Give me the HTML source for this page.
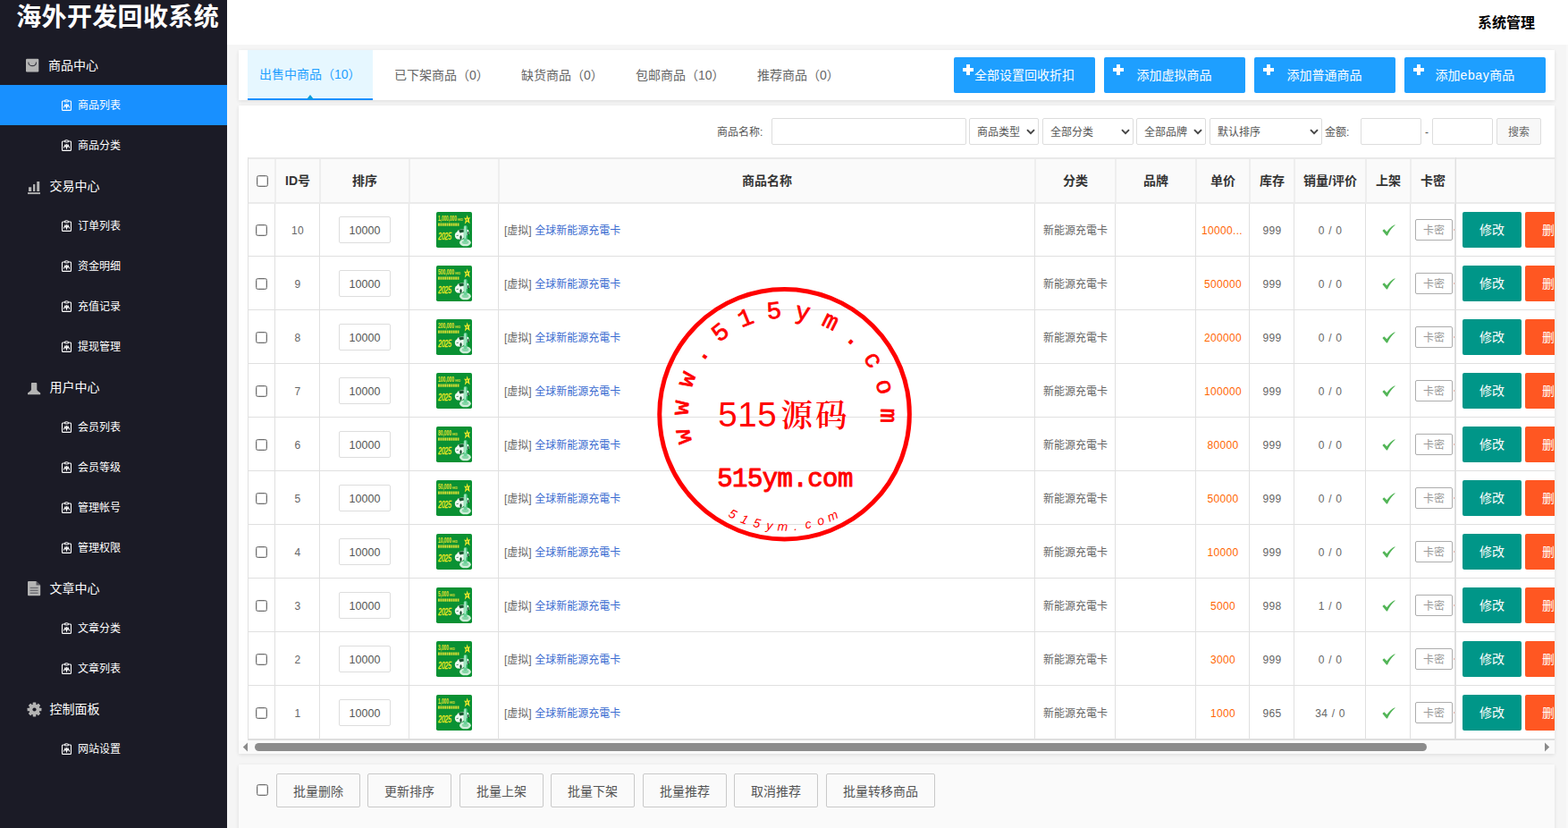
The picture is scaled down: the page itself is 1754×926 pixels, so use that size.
<!DOCTYPE html>
<html lang="zh-CN">
<head>
<meta charset="utf-8">
<title>海外开发回收系统</title>
<style>
*{box-sizing:border-box;margin:0;padding:0}
html,body{width:1754px;height:926px;overflow:hidden;background:#fff}
body{position:relative;font-family:"Liberation Sans","Noto Sans CJK SC",sans-serif;font-size:12px;color:#666;-webkit-font-smoothing:antialiased}
.a{position:absolute;white-space:nowrap}
.side{left:0;top:0;width:254px;height:926px;background:#1b1b26;color:#fff}
.logo{left:0;top:1px;width:254px;height:38px;line-height:38px;font-size:28px;font-weight:700;color:#fff;padding-left:18.2px;letter-spacing:.35px}
.grp{height:45px;line-height:47px;font-size:14px;color:#fff}
.itm{left:0;width:254px;height:45px;line-height:47px;font-size:12px;color:#fff;padding-left:87px}
.itm.on{background:#1890ff}
.itm svg{position:absolute;left:68px;top:16px}
.top{left:254px;top:0;width:1500px;height:50px;background:#fff}
.main{left:254px;top:50px;width:1500px;height:876px;background:#f5f5f5}
.card{background:#fff;box-shadow:0 1px 4px rgba(0,0,0,.07),0 2px 6px rgba(0,0,0,.03)}
.tab{top:56px;height:56px;line-height:56px;font-size:14px;color:#666}
.tab.on{background:#e6f7ff;color:#1e9fff;border-bottom:2px solid #1890ff;line-height:55px}
.btn{top:64px;width:158px;height:40px;background:#1e9fff;border-radius:2px;color:#fff;font-size:14px;line-height:40px}
.btn i{position:absolute;left:10px;top:8px;width:12px;height:12px}
.btn i:before,.btn i:after{content:"";position:absolute;background:#fff}
.btn i:before{left:4px;top:0;width:4px;height:12px}
.btn i:after{left:0;top:4px;width:12px;height:4px}
.btn span{position:absolute;top:0}
.inp{top:132px;height:30px;border:1px solid #ddd;border-radius:2px;background:#fff;line-height:30px;font-size:12px;color:#555}
.sel span{position:absolute;left:8px;top:0}
.sel svg{position:absolute;right:3px;top:11px}
.lbl{top:132px;height:30px;line-height:32px;font-size:12px;color:#555}
.th{top:177px;height:49px;line-height:51px;font-size:14px;font-weight:700;color:#333;text-align:center}
.vl{width:1px;background:#e0e0e0}
.hl{height:1px;background:#e0e0e0}
.td{height:59px;line-height:63px;font-size:12px;color:#666;text-align:center;letter-spacing:.33px;word-spacing:.8px}
.cb{width:13px;height:13px;border:1px solid #707070;border-radius:2.5px;background:#fff;box-shadow:inset 0 0 0 1px rgba(118,118,118,.3)}
.sort{left:379px;width:58px;height:30px;border:1px solid #ddd;border-radius:2px;background:#fff;line-height:30px;font-size:12.5px;color:#555;text-align:center}
.nm{left:564px;height:59px;line-height:63px;word-spacing:.2px;font-size:12px;color:#666}
.nm b{font-weight:400;color:#3a6bd0}
.pr{color:#ff6600}
.km{left:1583px;width:42px;height:24px;border:1px solid #adadad;border-radius:2px;background:#fff;line-height:24px;font-size:12px;color:#999;text-align:center}
.ed{left:1636px;width:66px;height:40px;border-radius:2px;background:#009688;color:#fff;font-size:14px;line-height:40px;text-align:center}
.de{left:1706px;width:66px;height:40px;border-radius:2px;background:#ff5722;color:#fff;font-size:14px;line-height:40px;text-align:center}
.th2{left:0;top:0}
.bb{top:865px;height:38px;border:1px solid #c9c9c9;border-radius:2px;line-height:38px;font-size:14px;color:#555;text-align:center;background:#fafafa}
</style>
</head>
<body>
<div class="a side">
<div class="a logo">海外开发回收系统</div>
<svg class="a" style="left:29px;top:65px" width="15" height="16" viewBox="0 0 15 16"><rect x="0" y="0.7" width="14.3" height="14.7" rx="1.2" fill="#b4b4b4"/><path d="M2.8 4.4 C2.8 10 11.5 10 11.5 4.4" fill="none" stroke="#3a3a42" stroke-width="1.1"/></svg>
<div class="a grp" style="left:54px;top:50px">商品中心</div>
<div class="a itm on" style="top:95px"><svg width="12" height="13" viewBox="0 0 12 13"><rect x="1.5" y="2" width="10" height="10.4" rx="1" fill="none" stroke="#fff" stroke-width="1.1"/><ellipse cx="6.5" cy="1.9" rx="2" ry="1.15" fill="#1890ff" stroke="#fff" stroke-width="1.1"/><path d="M3.2 9.6 L5 6 L6.5 9.8 L8 6 L9.8 9.6" fill="none" stroke="#fff" stroke-width="1.1"/><path d="M6.5 5 V9" stroke="#fff" stroke-width="0.9"/></svg>商品列表</div>
<div class="a itm" style="top:140px"><svg width="12" height="13" viewBox="0 0 12 13"><rect x="1.5" y="2" width="10" height="10.4" rx="1" fill="none" stroke="#fff" stroke-width="1.1"/><ellipse cx="6.5" cy="1.9" rx="2" ry="1.15" fill="#1b1b26" stroke="#fff" stroke-width="1.1"/><path d="M3.2 9.6 L5 6 L6.5 9.8 L8 6 L9.8 9.6" fill="none" stroke="#fff" stroke-width="1.1"/><path d="M6.5 5 V9" stroke="#fff" stroke-width="0.9"/></svg>商品分类</div>
<svg class="a" style="left:31px;top:203px" width="14" height="15" viewBox="0 0 14 15"><g fill="#b4b4b4"><rect x="1" y="6.3" width="3.2" height="4.7"/><rect x="6" y="3.1" width="2.3" height="7.9"/><rect x="10.2" y="0" width="3" height="11"/><rect x="0" y="12.2" width="14" height="1.9"/></g></svg>
<div class="a grp" style="left:55.5px;top:185px">交易中心</div>
<div class="a itm" style="top:230px"><svg width="12" height="13" viewBox="0 0 12 13"><rect x="1.5" y="2" width="10" height="10.4" rx="1" fill="none" stroke="#fff" stroke-width="1.1"/><ellipse cx="6.5" cy="1.9" rx="2" ry="1.15" fill="#1b1b26" stroke="#fff" stroke-width="1.1"/><path d="M3.2 9.6 L5 6 L6.5 9.8 L8 6 L9.8 9.6" fill="none" stroke="#fff" stroke-width="1.1"/><path d="M6.5 5 V9" stroke="#fff" stroke-width="0.9"/></svg>订单列表</div>
<div class="a itm" style="top:275px"><svg width="12" height="13" viewBox="0 0 12 13"><rect x="1.5" y="2" width="10" height="10.4" rx="1" fill="none" stroke="#fff" stroke-width="1.1"/><ellipse cx="6.5" cy="1.9" rx="2" ry="1.15" fill="#1b1b26" stroke="#fff" stroke-width="1.1"/><path d="M3.2 9.6 L5 6 L6.5 9.8 L8 6 L9.8 9.6" fill="none" stroke="#fff" stroke-width="1.1"/><path d="M6.5 5 V9" stroke="#fff" stroke-width="0.9"/></svg>资金明细</div>
<div class="a itm" style="top:320px"><svg width="12" height="13" viewBox="0 0 12 13"><rect x="1.5" y="2" width="10" height="10.4" rx="1" fill="none" stroke="#fff" stroke-width="1.1"/><ellipse cx="6.5" cy="1.9" rx="2" ry="1.15" fill="#1b1b26" stroke="#fff" stroke-width="1.1"/><path d="M3.2 9.6 L5 6 L6.5 9.8 L8 6 L9.8 9.6" fill="none" stroke="#fff" stroke-width="1.1"/><path d="M6.5 5 V9" stroke="#fff" stroke-width="0.9"/></svg>充值记录</div>
<div class="a itm" style="top:365px"><svg width="12" height="13" viewBox="0 0 12 13"><rect x="1.5" y="2" width="10" height="10.4" rx="1" fill="none" stroke="#fff" stroke-width="1.1"/><ellipse cx="6.5" cy="1.9" rx="2" ry="1.15" fill="#1b1b26" stroke="#fff" stroke-width="1.1"/><path d="M3.2 9.6 L5 6 L6.5 9.8 L8 6 L9.8 9.6" fill="none" stroke="#fff" stroke-width="1.1"/><path d="M6.5 5 V9" stroke="#fff" stroke-width="0.9"/></svg>提现管理</div>
<svg class="a" style="left:31px;top:428px" width="15" height="14" viewBox="0 0 15 14"><g fill="#b4b4b4"><rect x="3.9" y="0" width="6.4" height="9" rx="1"/><path d="M0 13.2 L0 11.6 L3 9.2 L3.9 8 L10.3 8 L11.2 9.2 L14.2 11.6 L14.2 13.2 Z"/></g></svg>
<div class="a grp" style="left:55.5px;top:410px">用户中心</div>
<div class="a itm" style="top:455px"><svg width="12" height="13" viewBox="0 0 12 13"><rect x="1.5" y="2" width="10" height="10.4" rx="1" fill="none" stroke="#fff" stroke-width="1.1"/><ellipse cx="6.5" cy="1.9" rx="2" ry="1.15" fill="#1b1b26" stroke="#fff" stroke-width="1.1"/><path d="M3.2 9.6 L5 6 L6.5 9.8 L8 6 L9.8 9.6" fill="none" stroke="#fff" stroke-width="1.1"/><path d="M6.5 5 V9" stroke="#fff" stroke-width="0.9"/></svg>会员列表</div>
<div class="a itm" style="top:500px"><svg width="12" height="13" viewBox="0 0 12 13"><rect x="1.5" y="2" width="10" height="10.4" rx="1" fill="none" stroke="#fff" stroke-width="1.1"/><ellipse cx="6.5" cy="1.9" rx="2" ry="1.15" fill="#1b1b26" stroke="#fff" stroke-width="1.1"/><path d="M3.2 9.6 L5 6 L6.5 9.8 L8 6 L9.8 9.6" fill="none" stroke="#fff" stroke-width="1.1"/><path d="M6.5 5 V9" stroke="#fff" stroke-width="0.9"/></svg>会员等级</div>
<div class="a itm" style="top:545px"><svg width="12" height="13" viewBox="0 0 12 13"><rect x="1.5" y="2" width="10" height="10.4" rx="1" fill="none" stroke="#fff" stroke-width="1.1"/><ellipse cx="6.5" cy="1.9" rx="2" ry="1.15" fill="#1b1b26" stroke="#fff" stroke-width="1.1"/><path d="M3.2 9.6 L5 6 L6.5 9.8 L8 6 L9.8 9.6" fill="none" stroke="#fff" stroke-width="1.1"/><path d="M6.5 5 V9" stroke="#fff" stroke-width="0.9"/></svg>管理帐号</div>
<div class="a itm" style="top:590px"><svg width="12" height="13" viewBox="0 0 12 13"><rect x="1.5" y="2" width="10" height="10.4" rx="1" fill="none" stroke="#fff" stroke-width="1.1"/><ellipse cx="6.5" cy="1.9" rx="2" ry="1.15" fill="#1b1b26" stroke="#fff" stroke-width="1.1"/><path d="M3.2 9.6 L5 6 L6.5 9.8 L8 6 L9.8 9.6" fill="none" stroke="#fff" stroke-width="1.1"/><path d="M6.5 5 V9" stroke="#fff" stroke-width="0.9"/></svg>管理权限</div>
<svg class="a" style="left:31px;top:650px" width="15" height="17" viewBox="0 0 15 17"><path d="M1 0 L9.5 0 L14.2 4.6 L14.2 15.2 Q14.2 16.2 13.2 16.2 L1 16.2 Q0 16.2 0 15.2 L0 1 Q0 0 1 0 Z" fill="#b4b4b4"/><path d="M9.5 0 L9.5 4.6 L14.2 4.6 Z" fill="#55555c"/><g fill="#6a6a70"><rect x="2.6" y="6.8" width="9" height="1.3"/><rect x="2.6" y="9.7" width="9" height="1.3"/><rect x="2.6" y="12.6" width="9" height="1.3"/></g></svg>
<div class="a grp" style="left:55.5px;top:635px">文章中心</div>
<div class="a itm" style="top:680px"><svg width="12" height="13" viewBox="0 0 12 13"><rect x="1.5" y="2" width="10" height="10.4" rx="1" fill="none" stroke="#fff" stroke-width="1.1"/><ellipse cx="6.5" cy="1.9" rx="2" ry="1.15" fill="#1b1b26" stroke="#fff" stroke-width="1.1"/><path d="M3.2 9.6 L5 6 L6.5 9.8 L8 6 L9.8 9.6" fill="none" stroke="#fff" stroke-width="1.1"/><path d="M6.5 5 V9" stroke="#fff" stroke-width="0.9"/></svg>文章分类</div>
<div class="a itm" style="top:725px"><svg width="12" height="13" viewBox="0 0 12 13"><rect x="1.5" y="2" width="10" height="10.4" rx="1" fill="none" stroke="#fff" stroke-width="1.1"/><ellipse cx="6.5" cy="1.9" rx="2" ry="1.15" fill="#1b1b26" stroke="#fff" stroke-width="1.1"/><path d="M3.2 9.6 L5 6 L6.5 9.8 L8 6 L9.8 9.6" fill="none" stroke="#fff" stroke-width="1.1"/><path d="M6.5 5 V9" stroke="#fff" stroke-width="0.9"/></svg>文章列表</div>
<svg class="a" style="left:29.5px;top:784.5px" width="17" height="17" viewBox="-8.5 -8.5 17 17"><g fill="#b4b4b4"><rect x="-1.8" y="-7.9" width="3.6" height="4" rx="0.6" transform="rotate(0)"/><rect x="-1.8" y="-7.9" width="3.6" height="4" rx="0.6" transform="rotate(45)"/><rect x="-1.8" y="-7.9" width="3.6" height="4" rx="0.6" transform="rotate(90)"/><rect x="-1.8" y="-7.9" width="3.6" height="4" rx="0.6" transform="rotate(135)"/><rect x="-1.8" y="-7.9" width="3.6" height="4" rx="0.6" transform="rotate(180)"/><rect x="-1.8" y="-7.9" width="3.6" height="4" rx="0.6" transform="rotate(225)"/><rect x="-1.8" y="-7.9" width="3.6" height="4" rx="0.6" transform="rotate(270)"/><rect x="-1.8" y="-7.9" width="3.6" height="4" rx="0.6" transform="rotate(315)"/><circle r="5.9"/></g><circle r="2.1" fill="#1b1b26"/></svg>
<div class="a grp" style="left:55.5px;top:770px">控制面板</div>
<div class="a itm" style="top:815px"><svg width="12" height="13" viewBox="0 0 12 13"><rect x="1.5" y="2" width="10" height="10.4" rx="1" fill="none" stroke="#fff" stroke-width="1.1"/><ellipse cx="6.5" cy="1.9" rx="2" ry="1.15" fill="#1b1b26" stroke="#fff" stroke-width="1.1"/><path d="M3.2 9.6 L5 6 L6.5 9.8 L8 6 L9.8 9.6" fill="none" stroke="#fff" stroke-width="1.1"/><path d="M6.5 5 V9" stroke="#fff" stroke-width="0.9"/></svg>网站设置</div>
</div>
<div class="a top"><div class="a" style="left:1399px;top:0;height:50px;line-height:52px;font-size:16px;font-weight:700;color:#000">系统管理</div></div>
<div class="a main"></div>
<div class="a" style="left:1752px;top:50px;width:2px;height:876px;background:#f9f9f9"></div>
<div class="a card" style="left:267px;top:56px;width:1472px;height:56px"></div>
<div class="a tab on" style="left:277px;width:140px;padding-left:13px">出售中商品（10）</div>
<div class="a" style="left:343px;top:105.5px;width:0;height:0;border-left:4.5px solid transparent;border-right:4.5px solid transparent;border-bottom:5px solid #0b9ddb"></div>
<div class="a tab" style="left:441px">已下架商品（0）</div>
<div class="a tab" style="left:583px">缺货商品（0）</div>
<div class="a tab" style="left:711px">包邮商品（10）</div>
<div class="a tab" style="left:847px">推荐商品（0）</div>
<div class="a btn" style="left:1067px"><i></i><span style="left:23px">全部设置回收折扣</span></div>
<div class="a btn" style="left:1235px"><i></i><span style="left:36.5px">添加虚拟商品</span></div>
<div class="a btn" style="left:1403px"><i></i><span style="left:36.5px">添加普通商品</span></div>
<div class="a btn" style="left:1571px"><i></i><span style="left:34.5px">添加<span style="position:static;letter-spacing:.6px">ebay</span>商品</span></div>
<div class="a card" style="left:267px;top:118px;width:1472px;height:725px;overflow:hidden">
</div>
<div class="a lbl" style="left:802px">商品名称:</div>
<div class="a inp" style="left:863px;width:218px"></div>
<div class="a inp sel" style="left:1084px;width:78px"><span>商品类型</span><svg width="10" height="7" viewBox="0 0 10 7"><path d="M1 1.2 L5 5.2 L9 1.2" fill="none" stroke="#444" stroke-width="1.9"/></svg></div>
<div class="a inp sel" style="left:1166px;width:102px"><span>全部分类</span><svg width="10" height="7" viewBox="0 0 10 7"><path d="M1 1.2 L5 5.2 L9 1.2" fill="none" stroke="#444" stroke-width="1.9"/></svg></div>
<div class="a inp sel" style="left:1271px;width:78px"><span>全部品牌</span><svg width="10" height="7" viewBox="0 0 10 7"><path d="M1 1.2 L5 5.2 L9 1.2" fill="none" stroke="#444" stroke-width="1.9"/></svg></div>
<div class="a inp sel" style="left:1353px;width:126px"><span>默认排序</span><svg width="10" height="7" viewBox="0 0 10 7"><path d="M1 1.2 L5 5.2 L9 1.2" fill="none" stroke="#444" stroke-width="1.9"/></svg></div>
<div class="a lbl" style="left:1482px">金额:</div>
<div class="a inp" style="left:1522px;width:68px"></div>
<div class="a lbl" style="left:1594px">-</div>
<div class="a inp" style="left:1602px;width:68px"></div>
<div class="a inp" style="left:1674px;width:50px;background:#f8f8f8;text-align:center;color:#666">搜索</div>
<div class="a" style="left:277px;top:176px;width:1462px;height:652px;overflow:hidden;background:#fff">
<div class="a" style="left:0;top:0;width:1462px;height:51px;background:#fafafa"></div>
<div class="a" style="left:0;top:0;width:1462px;height:2px;background:#e9e9e9"></div>
<div class="a" style="left:0;top:50px;width:1462px;height:2px;background:#ebebeb"></div>
<div class="a hl" style="left:0;top:110px;width:1462px"></div>
<div class="a hl" style="left:0;top:170px;width:1462px"></div>
<div class="a hl" style="left:0;top:230px;width:1462px"></div>
<div class="a hl" style="left:0;top:290px;width:1462px"></div>
<div class="a hl" style="left:0;top:350px;width:1462px"></div>
<div class="a hl" style="left:0;top:410px;width:1462px"></div>
<div class="a hl" style="left:0;top:470px;width:1462px"></div>
<div class="a hl" style="left:0;top:530px;width:1462px"></div>
<div class="a hl" style="left:0;top:590px;width:1462px"></div>
<div class="a hl" style="left:0;top:650px;width:1462px"></div>
<div class="a" style="left:0;top:650px;width:1462px;height:2px;background:#dedede"></div>
<div class="a vl" style="left:0;top:0;height:651px"></div>
<div class="a vl" style="left:30px;top:52px;height:599px"></div>
<div class="a" style="left:30px;top:2px;width:2px;height:48px;background:#eeeeee"></div>
<div class="a vl" style="left:80px;top:52px;height:599px"></div>
<div class="a" style="left:80px;top:2px;width:2px;height:48px;background:#eeeeee"></div>
<div class="a vl" style="left:180px;top:52px;height:599px"></div>
<div class="a" style="left:180px;top:2px;width:2px;height:48px;background:#eeeeee"></div>
<div class="a vl" style="left:280px;top:52px;height:599px"></div>
<div class="a" style="left:280px;top:2px;width:2px;height:48px;background:#eeeeee"></div>
<div class="a vl" style="left:880px;top:52px;height:599px"></div>
<div class="a" style="left:880px;top:2px;width:2px;height:48px;background:#eeeeee"></div>
<div class="a vl" style="left:970px;top:52px;height:599px"></div>
<div class="a" style="left:970px;top:2px;width:2px;height:48px;background:#eeeeee"></div>
<div class="a vl" style="left:1060px;top:52px;height:599px"></div>
<div class="a" style="left:1060px;top:2px;width:2px;height:48px;background:#eeeeee"></div>
<div class="a vl" style="left:1120px;top:52px;height:599px"></div>
<div class="a" style="left:1120px;top:2px;width:2px;height:48px;background:#eeeeee"></div>
<div class="a vl" style="left:1170px;top:52px;height:599px"></div>
<div class="a" style="left:1170px;top:2px;width:2px;height:48px;background:#eeeeee"></div>
<div class="a vl" style="left:1250px;top:52px;height:599px"></div>
<div class="a" style="left:1250px;top:2px;width:2px;height:48px;background:#eeeeee"></div>
<div class="a vl" style="left:1300px;top:52px;height:599px"></div>
<div class="a" style="left:1300px;top:2px;width:2px;height:48px;background:#eeeeee"></div>
<div class="a vl" style="left:1350px;top:52px;height:599px"></div>
<div class="a" style="left:1350px;top:2px;width:2px;height:48px;background:#eeeeee"></div>
<div class="a vl" style="left:1351px;top:0;height:651px"></div>
<div class="a cb" style="left:10px;top:20px"></div>
<div class="a th" style="left:31px;top:1px;width:50px">ID号</div>
<div class="a th" style="left:81px;top:1px;width:100px">排序</div>
<div class="a th" style="left:281px;top:1px;width:600px">商品名称</div>
<div class="a th" style="left:881px;top:1px;width:90px">分类</div>
<div class="a th" style="left:971px;top:1px;width:90px">品牌</div>
<div class="a th" style="left:1061px;top:1px;width:60px">单价</div>
<div class="a th" style="left:1121px;top:1px;width:50px">库存</div>
<div class="a th" style="left:1171px;top:1px;width:80px">销量/评价</div>
<div class="a th" style="left:1251px;top:1px;width:50px">上架</div>
<div class="a th" style="left:1301px;top:1px;width:50px">卡密</div>
<div class="a cb" style="left:9px;top:75px"></div>
<div class="a td" style="left:31px;top:51px;width:50px">10</div>
<div class="a sort" style="top:66px;left:102px">10000</div>
<svg class="a" style="left:211px;top:61px" width="40" height="40" viewBox="0 0 40 40"><rect width="40" height="40" rx="1.8" fill="#0a9133"/><text x="2" y="10.1" font-family="Liberation Sans,sans-serif" font-size="8.6" font-weight="700" fill="#e3e230" textLength="20.8" lengthAdjust="spacingAndGlyphs">1,000,000</text><text x="23.7" y="9.9" font-family="Liberation Sans,sans-serif" font-size="4.2" font-weight="700" fill="#dfe033" textLength="6" lengthAdjust="spacingAndGlyphs">HKD</text><path d="M2 14.15 H26" stroke="#dde034" stroke-width="3.2" stroke-dasharray="1.9 0.5" opacity=".92"/><text x="2.2" y="31" font-family="Liberation Sans,sans-serif" font-size="10.4" font-style="italic" fill="#f4ec22" stroke="#f4ec22" stroke-width="0.35" textLength="14.8" lengthAdjust="spacingAndGlyphs">2025</text><path d="M34.7 3.2 L35.6 6.7 L38.1 6 L36.6 8.8 L37.7 13.2 L34.6 10.8 L31.8 13.7 L32.8 9.2 L31 6.6 L33.6 6.9 Z" fill="#f1e82c"/><path d="M34.4 7.2 L35.1 8.7 L34.4 10.2 L33.7 8.7 Z" fill="#0a9133"/><ellipse cx="32.4" cy="34.3" rx="6.4" ry="4" fill="#cfeeda"/><ellipse cx="32.6" cy="34" rx="3.8" ry="2.1" fill="#86d6a6"/><path d="M20.8 26 Q20.8 23 23 22.4 L24.6 20.3 L30.8 18.9 L36 20 L37 24.6 L34.5 26 L28.4 30.8 L23.5 30.4 Q20.8 29.5 20.8 26 Z" fill="#eef9f1"/><path d="M24.9 20.6 L30.6 19.3 L31 22.6 L26.6 23.6 Z" fill="#1c5632"/><ellipse cx="27.5" cy="28.6" rx="1.1" ry="2.3" fill="#123f25"/><ellipse cx="35.6" cy="24" rx="0.8" ry="2" fill="#123f25"/><path d="M22.6 26.6 L24.8 26.2" stroke="#2c6a45" stroke-width="0.8"/><rect x="30.7" y="14.9" width="3.9" height="18.4" rx="1.8" fill="#63cf95" opacity=".92"/><rect x="31.5" y="16" width="1.4" height="14" rx="0.7" fill="#baf0d2"/></svg>
<div class="a nm" style="left:287px;top:51px">[虚拟] <b>全球新能源充電卡</b></div>
<div class="a td" style="left:881px;top:51px;width:90px;letter-spacing:0">新能源充電卡</div>
<div class="a td pr" style="left:1067px;top:51px;width:48px;text-align:left">10000...</div>
<div class="a td" style="left:1121px;top:51px;width:50px">999</div>
<div class="a td" style="left:1171px;top:51px;width:80px">0 / 0</div>
<svg class="a" style="left:1268.5px;top:74.6px" width="15" height="13" viewBox="0 0 15 13"><path d="M0.4 6.9 L2.3 5.2 L5.3 8.3 C7.5 5 10.5 2 14.3 0.2 L14.6 0.7 C11 3.6 8.3 7.6 6 12.4 L5 12.4 Z" fill="#52b557"/></svg>
<div class="a km" style="left:1306px;top:69px">卡密</div>
<div class="a" style="left:1349px;top:80px;width:1px;height:2px;background:#e3b0a6"></div>
<div class="a ed" style="left:1359px;top:61px">修改</div>
<div class="a de" style="left:1429px;top:61px">删除</div>
<div class="a cb" style="left:9px;top:135px"></div>
<div class="a td" style="left:31px;top:111px;width:50px">9</div>
<div class="a sort" style="top:126px;left:102px">10000</div>
<svg class="a" style="left:211px;top:121px" width="40" height="40" viewBox="0 0 40 40"><rect width="40" height="40" rx="1.8" fill="#0a9133"/><text x="2" y="10.1" font-family="Liberation Sans,sans-serif" font-size="8.6" font-weight="700" fill="#e3e230" textLength="18.1" lengthAdjust="spacingAndGlyphs">500,000</text><text x="21.0" y="9.9" font-family="Liberation Sans,sans-serif" font-size="4.2" font-weight="700" fill="#dfe033" textLength="6" lengthAdjust="spacingAndGlyphs">HKD</text><path d="M2 14.15 H26" stroke="#dde034" stroke-width="3.2" stroke-dasharray="1.9 0.5" opacity=".92"/><text x="2.2" y="31" font-family="Liberation Sans,sans-serif" font-size="10.4" font-style="italic" fill="#f4ec22" stroke="#f4ec22" stroke-width="0.35" textLength="14.8" lengthAdjust="spacingAndGlyphs">2025</text><path d="M34.7 3.2 L35.6 6.7 L38.1 6 L36.6 8.8 L37.7 13.2 L34.6 10.8 L31.8 13.7 L32.8 9.2 L31 6.6 L33.6 6.9 Z" fill="#f1e82c"/><path d="M34.4 7.2 L35.1 8.7 L34.4 10.2 L33.7 8.7 Z" fill="#0a9133"/><ellipse cx="32.4" cy="34.3" rx="6.4" ry="4" fill="#cfeeda"/><ellipse cx="32.6" cy="34" rx="3.8" ry="2.1" fill="#86d6a6"/><path d="M20.8 26 Q20.8 23 23 22.4 L24.6 20.3 L30.8 18.9 L36 20 L37 24.6 L34.5 26 L28.4 30.8 L23.5 30.4 Q20.8 29.5 20.8 26 Z" fill="#eef9f1"/><path d="M24.9 20.6 L30.6 19.3 L31 22.6 L26.6 23.6 Z" fill="#1c5632"/><ellipse cx="27.5" cy="28.6" rx="1.1" ry="2.3" fill="#123f25"/><ellipse cx="35.6" cy="24" rx="0.8" ry="2" fill="#123f25"/><path d="M22.6 26.6 L24.8 26.2" stroke="#2c6a45" stroke-width="0.8"/><rect x="30.7" y="14.9" width="3.9" height="18.4" rx="1.8" fill="#63cf95" opacity=".92"/><rect x="31.5" y="16" width="1.4" height="14" rx="0.7" fill="#baf0d2"/></svg>
<div class="a nm" style="left:287px;top:111px">[虚拟] <b>全球新能源充電卡</b></div>
<div class="a td" style="left:881px;top:111px;width:90px;letter-spacing:0">新能源充電卡</div>
<div class="a td pr" style="left:1061px;top:111px;width:60px">500000</div>
<div class="a td" style="left:1121px;top:111px;width:50px">999</div>
<div class="a td" style="left:1171px;top:111px;width:80px">0 / 0</div>
<svg class="a" style="left:1268.5px;top:134.6px" width="15" height="13" viewBox="0 0 15 13"><path d="M0.4 6.9 L2.3 5.2 L5.3 8.3 C7.5 5 10.5 2 14.3 0.2 L14.6 0.7 C11 3.6 8.3 7.6 6 12.4 L5 12.4 Z" fill="#52b557"/></svg>
<div class="a km" style="left:1306px;top:129px">卡密</div>
<div class="a" style="left:1349px;top:140px;width:1px;height:2px;background:#e3b0a6"></div>
<div class="a ed" style="left:1359px;top:121px">修改</div>
<div class="a de" style="left:1429px;top:121px">删除</div>
<div class="a cb" style="left:9px;top:195px"></div>
<div class="a td" style="left:31px;top:171px;width:50px">8</div>
<div class="a sort" style="top:186px;left:102px">10000</div>
<svg class="a" style="left:211px;top:181px" width="40" height="40" viewBox="0 0 40 40"><rect width="40" height="40" rx="1.8" fill="#0a9133"/><text x="2" y="10.1" font-family="Liberation Sans,sans-serif" font-size="8.6" font-weight="700" fill="#e3e230" textLength="18.1" lengthAdjust="spacingAndGlyphs">200,000</text><text x="21.0" y="9.9" font-family="Liberation Sans,sans-serif" font-size="4.2" font-weight="700" fill="#dfe033" textLength="6" lengthAdjust="spacingAndGlyphs">HKD</text><path d="M2 14.15 H26" stroke="#dde034" stroke-width="3.2" stroke-dasharray="1.9 0.5" opacity=".92"/><text x="2.2" y="31" font-family="Liberation Sans,sans-serif" font-size="10.4" font-style="italic" fill="#f4ec22" stroke="#f4ec22" stroke-width="0.35" textLength="14.8" lengthAdjust="spacingAndGlyphs">2025</text><path d="M34.7 3.2 L35.6 6.7 L38.1 6 L36.6 8.8 L37.7 13.2 L34.6 10.8 L31.8 13.7 L32.8 9.2 L31 6.6 L33.6 6.9 Z" fill="#f1e82c"/><path d="M34.4 7.2 L35.1 8.7 L34.4 10.2 L33.7 8.7 Z" fill="#0a9133"/><ellipse cx="32.4" cy="34.3" rx="6.4" ry="4" fill="#cfeeda"/><ellipse cx="32.6" cy="34" rx="3.8" ry="2.1" fill="#86d6a6"/><path d="M20.8 26 Q20.8 23 23 22.4 L24.6 20.3 L30.8 18.9 L36 20 L37 24.6 L34.5 26 L28.4 30.8 L23.5 30.4 Q20.8 29.5 20.8 26 Z" fill="#eef9f1"/><path d="M24.9 20.6 L30.6 19.3 L31 22.6 L26.6 23.6 Z" fill="#1c5632"/><ellipse cx="27.5" cy="28.6" rx="1.1" ry="2.3" fill="#123f25"/><ellipse cx="35.6" cy="24" rx="0.8" ry="2" fill="#123f25"/><path d="M22.6 26.6 L24.8 26.2" stroke="#2c6a45" stroke-width="0.8"/><rect x="30.7" y="14.9" width="3.9" height="18.4" rx="1.8" fill="#63cf95" opacity=".92"/><rect x="31.5" y="16" width="1.4" height="14" rx="0.7" fill="#baf0d2"/></svg>
<div class="a nm" style="left:287px;top:171px">[虚拟] <b>全球新能源充電卡</b></div>
<div class="a td" style="left:881px;top:171px;width:90px;letter-spacing:0">新能源充電卡</div>
<div class="a td pr" style="left:1061px;top:171px;width:60px">200000</div>
<div class="a td" style="left:1121px;top:171px;width:50px">999</div>
<div class="a td" style="left:1171px;top:171px;width:80px">0 / 0</div>
<svg class="a" style="left:1268.5px;top:194.6px" width="15" height="13" viewBox="0 0 15 13"><path d="M0.4 6.9 L2.3 5.2 L5.3 8.3 C7.5 5 10.5 2 14.3 0.2 L14.6 0.7 C11 3.6 8.3 7.6 6 12.4 L5 12.4 Z" fill="#52b557"/></svg>
<div class="a km" style="left:1306px;top:189px">卡密</div>
<div class="a" style="left:1349px;top:200px;width:1px;height:2px;background:#e3b0a6"></div>
<div class="a ed" style="left:1359px;top:181px">修改</div>
<div class="a de" style="left:1429px;top:181px">删除</div>
<div class="a cb" style="left:9px;top:255px"></div>
<div class="a td" style="left:31px;top:231px;width:50px">7</div>
<div class="a sort" style="top:246px;left:102px">10000</div>
<svg class="a" style="left:211px;top:241px" width="40" height="40" viewBox="0 0 40 40"><rect width="40" height="40" rx="1.8" fill="#0a9133"/><text x="2" y="10.1" font-family="Liberation Sans,sans-serif" font-size="8.6" font-weight="700" fill="#e3e230" textLength="18.1" lengthAdjust="spacingAndGlyphs">100,000</text><text x="21.0" y="9.9" font-family="Liberation Sans,sans-serif" font-size="4.2" font-weight="700" fill="#dfe033" textLength="6" lengthAdjust="spacingAndGlyphs">HKD</text><path d="M2 14.15 H26" stroke="#dde034" stroke-width="3.2" stroke-dasharray="1.9 0.5" opacity=".92"/><text x="2.2" y="31" font-family="Liberation Sans,sans-serif" font-size="10.4" font-style="italic" fill="#f4ec22" stroke="#f4ec22" stroke-width="0.35" textLength="14.8" lengthAdjust="spacingAndGlyphs">2025</text><path d="M34.7 3.2 L35.6 6.7 L38.1 6 L36.6 8.8 L37.7 13.2 L34.6 10.8 L31.8 13.7 L32.8 9.2 L31 6.6 L33.6 6.9 Z" fill="#f1e82c"/><path d="M34.4 7.2 L35.1 8.7 L34.4 10.2 L33.7 8.7 Z" fill="#0a9133"/><ellipse cx="32.4" cy="34.3" rx="6.4" ry="4" fill="#cfeeda"/><ellipse cx="32.6" cy="34" rx="3.8" ry="2.1" fill="#86d6a6"/><path d="M20.8 26 Q20.8 23 23 22.4 L24.6 20.3 L30.8 18.9 L36 20 L37 24.6 L34.5 26 L28.4 30.8 L23.5 30.4 Q20.8 29.5 20.8 26 Z" fill="#eef9f1"/><path d="M24.9 20.6 L30.6 19.3 L31 22.6 L26.6 23.6 Z" fill="#1c5632"/><ellipse cx="27.5" cy="28.6" rx="1.1" ry="2.3" fill="#123f25"/><ellipse cx="35.6" cy="24" rx="0.8" ry="2" fill="#123f25"/><path d="M22.6 26.6 L24.8 26.2" stroke="#2c6a45" stroke-width="0.8"/><rect x="30.7" y="14.9" width="3.9" height="18.4" rx="1.8" fill="#63cf95" opacity=".92"/><rect x="31.5" y="16" width="1.4" height="14" rx="0.7" fill="#baf0d2"/></svg>
<div class="a nm" style="left:287px;top:231px">[虚拟] <b>全球新能源充電卡</b></div>
<div class="a td" style="left:881px;top:231px;width:90px;letter-spacing:0">新能源充電卡</div>
<div class="a td pr" style="left:1061px;top:231px;width:60px">100000</div>
<div class="a td" style="left:1121px;top:231px;width:50px">999</div>
<div class="a td" style="left:1171px;top:231px;width:80px">0 / 0</div>
<svg class="a" style="left:1268.5px;top:254.6px" width="15" height="13" viewBox="0 0 15 13"><path d="M0.4 6.9 L2.3 5.2 L5.3 8.3 C7.5 5 10.5 2 14.3 0.2 L14.6 0.7 C11 3.6 8.3 7.6 6 12.4 L5 12.4 Z" fill="#52b557"/></svg>
<div class="a km" style="left:1306px;top:249px">卡密</div>
<div class="a" style="left:1349px;top:260px;width:1px;height:2px;background:#e3b0a6"></div>
<div class="a ed" style="left:1359px;top:241px">修改</div>
<div class="a de" style="left:1429px;top:241px">删除</div>
<div class="a cb" style="left:9px;top:315px"></div>
<div class="a td" style="left:31px;top:291px;width:50px">6</div>
<div class="a sort" style="top:306px;left:102px">10000</div>
<svg class="a" style="left:211px;top:301px" width="40" height="40" viewBox="0 0 40 40"><rect width="40" height="40" rx="1.8" fill="#0a9133"/><text x="2" y="10.1" font-family="Liberation Sans,sans-serif" font-size="8.6" font-weight="700" fill="#e3e230" textLength="14.9" lengthAdjust="spacingAndGlyphs">80,000</text><text x="17.8" y="9.9" font-family="Liberation Sans,sans-serif" font-size="4.2" font-weight="700" fill="#dfe033" textLength="6" lengthAdjust="spacingAndGlyphs">HKD</text><path d="M2 14.15 H26" stroke="#dde034" stroke-width="3.2" stroke-dasharray="1.9 0.5" opacity=".92"/><text x="2.2" y="31" font-family="Liberation Sans,sans-serif" font-size="10.4" font-style="italic" fill="#f4ec22" stroke="#f4ec22" stroke-width="0.35" textLength="14.8" lengthAdjust="spacingAndGlyphs">2025</text><path d="M34.7 3.2 L35.6 6.7 L38.1 6 L36.6 8.8 L37.7 13.2 L34.6 10.8 L31.8 13.7 L32.8 9.2 L31 6.6 L33.6 6.9 Z" fill="#f1e82c"/><path d="M34.4 7.2 L35.1 8.7 L34.4 10.2 L33.7 8.7 Z" fill="#0a9133"/><ellipse cx="32.4" cy="34.3" rx="6.4" ry="4" fill="#cfeeda"/><ellipse cx="32.6" cy="34" rx="3.8" ry="2.1" fill="#86d6a6"/><path d="M20.8 26 Q20.8 23 23 22.4 L24.6 20.3 L30.8 18.9 L36 20 L37 24.6 L34.5 26 L28.4 30.8 L23.5 30.4 Q20.8 29.5 20.8 26 Z" fill="#eef9f1"/><path d="M24.9 20.6 L30.6 19.3 L31 22.6 L26.6 23.6 Z" fill="#1c5632"/><ellipse cx="27.5" cy="28.6" rx="1.1" ry="2.3" fill="#123f25"/><ellipse cx="35.6" cy="24" rx="0.8" ry="2" fill="#123f25"/><path d="M22.6 26.6 L24.8 26.2" stroke="#2c6a45" stroke-width="0.8"/><rect x="30.7" y="14.9" width="3.9" height="18.4" rx="1.8" fill="#63cf95" opacity=".92"/><rect x="31.5" y="16" width="1.4" height="14" rx="0.7" fill="#baf0d2"/></svg>
<div class="a nm" style="left:287px;top:291px">[虚拟] <b>全球新能源充電卡</b></div>
<div class="a td" style="left:881px;top:291px;width:90px;letter-spacing:0">新能源充電卡</div>
<div class="a td pr" style="left:1061px;top:291px;width:60px">80000</div>
<div class="a td" style="left:1121px;top:291px;width:50px">999</div>
<div class="a td" style="left:1171px;top:291px;width:80px">0 / 0</div>
<svg class="a" style="left:1268.5px;top:314.6px" width="15" height="13" viewBox="0 0 15 13"><path d="M0.4 6.9 L2.3 5.2 L5.3 8.3 C7.5 5 10.5 2 14.3 0.2 L14.6 0.7 C11 3.6 8.3 7.6 6 12.4 L5 12.4 Z" fill="#52b557"/></svg>
<div class="a km" style="left:1306px;top:309px">卡密</div>
<div class="a" style="left:1349px;top:320px;width:1px;height:2px;background:#e3b0a6"></div>
<div class="a ed" style="left:1359px;top:301px">修改</div>
<div class="a de" style="left:1429px;top:301px">删除</div>
<div class="a cb" style="left:9px;top:375px"></div>
<div class="a td" style="left:31px;top:351px;width:50px">5</div>
<div class="a sort" style="top:366px;left:102px">10000</div>
<svg class="a" style="left:211px;top:361px" width="40" height="40" viewBox="0 0 40 40"><rect width="40" height="40" rx="1.8" fill="#0a9133"/><text x="2" y="10.1" font-family="Liberation Sans,sans-serif" font-size="8.6" font-weight="700" fill="#e3e230" textLength="14.9" lengthAdjust="spacingAndGlyphs">50,000</text><text x="17.8" y="9.9" font-family="Liberation Sans,sans-serif" font-size="4.2" font-weight="700" fill="#dfe033" textLength="6" lengthAdjust="spacingAndGlyphs">HKD</text><path d="M2 14.15 H26" stroke="#dde034" stroke-width="3.2" stroke-dasharray="1.9 0.5" opacity=".92"/><text x="2.2" y="31" font-family="Liberation Sans,sans-serif" font-size="10.4" font-style="italic" fill="#f4ec22" stroke="#f4ec22" stroke-width="0.35" textLength="14.8" lengthAdjust="spacingAndGlyphs">2025</text><path d="M34.7 3.2 L35.6 6.7 L38.1 6 L36.6 8.8 L37.7 13.2 L34.6 10.8 L31.8 13.7 L32.8 9.2 L31 6.6 L33.6 6.9 Z" fill="#f1e82c"/><path d="M34.4 7.2 L35.1 8.7 L34.4 10.2 L33.7 8.7 Z" fill="#0a9133"/><ellipse cx="32.4" cy="34.3" rx="6.4" ry="4" fill="#cfeeda"/><ellipse cx="32.6" cy="34" rx="3.8" ry="2.1" fill="#86d6a6"/><path d="M20.8 26 Q20.8 23 23 22.4 L24.6 20.3 L30.8 18.9 L36 20 L37 24.6 L34.5 26 L28.4 30.8 L23.5 30.4 Q20.8 29.5 20.8 26 Z" fill="#eef9f1"/><path d="M24.9 20.6 L30.6 19.3 L31 22.6 L26.6 23.6 Z" fill="#1c5632"/><ellipse cx="27.5" cy="28.6" rx="1.1" ry="2.3" fill="#123f25"/><ellipse cx="35.6" cy="24" rx="0.8" ry="2" fill="#123f25"/><path d="M22.6 26.6 L24.8 26.2" stroke="#2c6a45" stroke-width="0.8"/><rect x="30.7" y="14.9" width="3.9" height="18.4" rx="1.8" fill="#63cf95" opacity=".92"/><rect x="31.5" y="16" width="1.4" height="14" rx="0.7" fill="#baf0d2"/></svg>
<div class="a nm" style="left:287px;top:351px">[虚拟] <b>全球新能源充電卡</b></div>
<div class="a td" style="left:881px;top:351px;width:90px;letter-spacing:0">新能源充電卡</div>
<div class="a td pr" style="left:1061px;top:351px;width:60px">50000</div>
<div class="a td" style="left:1121px;top:351px;width:50px">999</div>
<div class="a td" style="left:1171px;top:351px;width:80px">0 / 0</div>
<svg class="a" style="left:1268.5px;top:374.6px" width="15" height="13" viewBox="0 0 15 13"><path d="M0.4 6.9 L2.3 5.2 L5.3 8.3 C7.5 5 10.5 2 14.3 0.2 L14.6 0.7 C11 3.6 8.3 7.6 6 12.4 L5 12.4 Z" fill="#52b557"/></svg>
<div class="a km" style="left:1306px;top:369px">卡密</div>
<div class="a" style="left:1349px;top:380px;width:1px;height:2px;background:#e3b0a6"></div>
<div class="a ed" style="left:1359px;top:361px">修改</div>
<div class="a de" style="left:1429px;top:361px">删除</div>
<div class="a cb" style="left:9px;top:435px"></div>
<div class="a td" style="left:31px;top:411px;width:50px">4</div>
<div class="a sort" style="top:426px;left:102px">10000</div>
<svg class="a" style="left:211px;top:421px" width="40" height="40" viewBox="0 0 40 40"><rect width="40" height="40" rx="1.8" fill="#0a9133"/><text x="2" y="10.1" font-family="Liberation Sans,sans-serif" font-size="8.6" font-weight="700" fill="#e3e230" textLength="14.9" lengthAdjust="spacingAndGlyphs">10,000</text><text x="17.8" y="9.9" font-family="Liberation Sans,sans-serif" font-size="4.2" font-weight="700" fill="#dfe033" textLength="6" lengthAdjust="spacingAndGlyphs">HKD</text><path d="M2 14.15 H26" stroke="#dde034" stroke-width="3.2" stroke-dasharray="1.9 0.5" opacity=".92"/><text x="2.2" y="31" font-family="Liberation Sans,sans-serif" font-size="10.4" font-style="italic" fill="#f4ec22" stroke="#f4ec22" stroke-width="0.35" textLength="14.8" lengthAdjust="spacingAndGlyphs">2025</text><path d="M34.7 3.2 L35.6 6.7 L38.1 6 L36.6 8.8 L37.7 13.2 L34.6 10.8 L31.8 13.7 L32.8 9.2 L31 6.6 L33.6 6.9 Z" fill="#f1e82c"/><path d="M34.4 7.2 L35.1 8.7 L34.4 10.2 L33.7 8.7 Z" fill="#0a9133"/><ellipse cx="32.4" cy="34.3" rx="6.4" ry="4" fill="#cfeeda"/><ellipse cx="32.6" cy="34" rx="3.8" ry="2.1" fill="#86d6a6"/><path d="M20.8 26 Q20.8 23 23 22.4 L24.6 20.3 L30.8 18.9 L36 20 L37 24.6 L34.5 26 L28.4 30.8 L23.5 30.4 Q20.8 29.5 20.8 26 Z" fill="#eef9f1"/><path d="M24.9 20.6 L30.6 19.3 L31 22.6 L26.6 23.6 Z" fill="#1c5632"/><ellipse cx="27.5" cy="28.6" rx="1.1" ry="2.3" fill="#123f25"/><ellipse cx="35.6" cy="24" rx="0.8" ry="2" fill="#123f25"/><path d="M22.6 26.6 L24.8 26.2" stroke="#2c6a45" stroke-width="0.8"/><rect x="30.7" y="14.9" width="3.9" height="18.4" rx="1.8" fill="#63cf95" opacity=".92"/><rect x="31.5" y="16" width="1.4" height="14" rx="0.7" fill="#baf0d2"/></svg>
<div class="a nm" style="left:287px;top:411px">[虚拟] <b>全球新能源充電卡</b></div>
<div class="a td" style="left:881px;top:411px;width:90px;letter-spacing:0">新能源充電卡</div>
<div class="a td pr" style="left:1061px;top:411px;width:60px">10000</div>
<div class="a td" style="left:1121px;top:411px;width:50px">999</div>
<div class="a td" style="left:1171px;top:411px;width:80px">0 / 0</div>
<svg class="a" style="left:1268.5px;top:434.6px" width="15" height="13" viewBox="0 0 15 13"><path d="M0.4 6.9 L2.3 5.2 L5.3 8.3 C7.5 5 10.5 2 14.3 0.2 L14.6 0.7 C11 3.6 8.3 7.6 6 12.4 L5 12.4 Z" fill="#52b557"/></svg>
<div class="a km" style="left:1306px;top:429px">卡密</div>
<div class="a" style="left:1349px;top:440px;width:1px;height:2px;background:#e3b0a6"></div>
<div class="a ed" style="left:1359px;top:421px">修改</div>
<div class="a de" style="left:1429px;top:421px">删除</div>
<div class="a cb" style="left:9px;top:495px"></div>
<div class="a td" style="left:31px;top:471px;width:50px">3</div>
<div class="a sort" style="top:486px;left:102px">10000</div>
<svg class="a" style="left:211px;top:481px" width="40" height="40" viewBox="0 0 40 40"><rect width="40" height="40" rx="1.8" fill="#0a9133"/><text x="2" y="10.1" font-family="Liberation Sans,sans-serif" font-size="8.6" font-weight="700" fill="#e3e230" textLength="11.9" lengthAdjust="spacingAndGlyphs">5,000</text><text x="14.8" y="9.9" font-family="Liberation Sans,sans-serif" font-size="4.2" font-weight="700" fill="#dfe033" textLength="6" lengthAdjust="spacingAndGlyphs">HKD</text><path d="M2 14.15 H26" stroke="#dde034" stroke-width="3.2" stroke-dasharray="1.9 0.5" opacity=".92"/><text x="2.2" y="31" font-family="Liberation Sans,sans-serif" font-size="10.4" font-style="italic" fill="#f4ec22" stroke="#f4ec22" stroke-width="0.35" textLength="14.8" lengthAdjust="spacingAndGlyphs">2025</text><path d="M34.7 3.2 L35.6 6.7 L38.1 6 L36.6 8.8 L37.7 13.2 L34.6 10.8 L31.8 13.7 L32.8 9.2 L31 6.6 L33.6 6.9 Z" fill="#f1e82c"/><path d="M34.4 7.2 L35.1 8.7 L34.4 10.2 L33.7 8.7 Z" fill="#0a9133"/><ellipse cx="32.4" cy="34.3" rx="6.4" ry="4" fill="#cfeeda"/><ellipse cx="32.6" cy="34" rx="3.8" ry="2.1" fill="#86d6a6"/><path d="M20.8 26 Q20.8 23 23 22.4 L24.6 20.3 L30.8 18.9 L36 20 L37 24.6 L34.5 26 L28.4 30.8 L23.5 30.4 Q20.8 29.5 20.8 26 Z" fill="#eef9f1"/><path d="M24.9 20.6 L30.6 19.3 L31 22.6 L26.6 23.6 Z" fill="#1c5632"/><ellipse cx="27.5" cy="28.6" rx="1.1" ry="2.3" fill="#123f25"/><ellipse cx="35.6" cy="24" rx="0.8" ry="2" fill="#123f25"/><path d="M22.6 26.6 L24.8 26.2" stroke="#2c6a45" stroke-width="0.8"/><rect x="30.7" y="14.9" width="3.9" height="18.4" rx="1.8" fill="#63cf95" opacity=".92"/><rect x="31.5" y="16" width="1.4" height="14" rx="0.7" fill="#baf0d2"/></svg>
<div class="a nm" style="left:287px;top:471px">[虚拟] <b>全球新能源充電卡</b></div>
<div class="a td" style="left:881px;top:471px;width:90px;letter-spacing:0">新能源充電卡</div>
<div class="a td pr" style="left:1061px;top:471px;width:60px">5000</div>
<div class="a td" style="left:1121px;top:471px;width:50px">998</div>
<div class="a td" style="left:1171px;top:471px;width:80px">1 / 0</div>
<svg class="a" style="left:1268.5px;top:494.6px" width="15" height="13" viewBox="0 0 15 13"><path d="M0.4 6.9 L2.3 5.2 L5.3 8.3 C7.5 5 10.5 2 14.3 0.2 L14.6 0.7 C11 3.6 8.3 7.6 6 12.4 L5 12.4 Z" fill="#52b557"/></svg>
<div class="a km" style="left:1306px;top:489px">卡密</div>
<div class="a" style="left:1349px;top:500px;width:1px;height:2px;background:#e3b0a6"></div>
<div class="a ed" style="left:1359px;top:481px">修改</div>
<div class="a de" style="left:1429px;top:481px">删除</div>
<div class="a cb" style="left:9px;top:555px"></div>
<div class="a td" style="left:31px;top:531px;width:50px">2</div>
<div class="a sort" style="top:546px;left:102px">10000</div>
<svg class="a" style="left:211px;top:541px" width="40" height="40" viewBox="0 0 40 40"><rect width="40" height="40" rx="1.8" fill="#0a9133"/><text x="2" y="10.1" font-family="Liberation Sans,sans-serif" font-size="8.6" font-weight="700" fill="#e3e230" textLength="11.9" lengthAdjust="spacingAndGlyphs">3,000</text><text x="14.8" y="9.9" font-family="Liberation Sans,sans-serif" font-size="4.2" font-weight="700" fill="#dfe033" textLength="6" lengthAdjust="spacingAndGlyphs">HKD</text><path d="M2 14.15 H26" stroke="#dde034" stroke-width="3.2" stroke-dasharray="1.9 0.5" opacity=".92"/><text x="2.2" y="31" font-family="Liberation Sans,sans-serif" font-size="10.4" font-style="italic" fill="#f4ec22" stroke="#f4ec22" stroke-width="0.35" textLength="14.8" lengthAdjust="spacingAndGlyphs">2025</text><path d="M34.7 3.2 L35.6 6.7 L38.1 6 L36.6 8.8 L37.7 13.2 L34.6 10.8 L31.8 13.7 L32.8 9.2 L31 6.6 L33.6 6.9 Z" fill="#f1e82c"/><path d="M34.4 7.2 L35.1 8.7 L34.4 10.2 L33.7 8.7 Z" fill="#0a9133"/><ellipse cx="32.4" cy="34.3" rx="6.4" ry="4" fill="#cfeeda"/><ellipse cx="32.6" cy="34" rx="3.8" ry="2.1" fill="#86d6a6"/><path d="M20.8 26 Q20.8 23 23 22.4 L24.6 20.3 L30.8 18.9 L36 20 L37 24.6 L34.5 26 L28.4 30.8 L23.5 30.4 Q20.8 29.5 20.8 26 Z" fill="#eef9f1"/><path d="M24.9 20.6 L30.6 19.3 L31 22.6 L26.6 23.6 Z" fill="#1c5632"/><ellipse cx="27.5" cy="28.6" rx="1.1" ry="2.3" fill="#123f25"/><ellipse cx="35.6" cy="24" rx="0.8" ry="2" fill="#123f25"/><path d="M22.6 26.6 L24.8 26.2" stroke="#2c6a45" stroke-width="0.8"/><rect x="30.7" y="14.9" width="3.9" height="18.4" rx="1.8" fill="#63cf95" opacity=".92"/><rect x="31.5" y="16" width="1.4" height="14" rx="0.7" fill="#baf0d2"/></svg>
<div class="a nm" style="left:287px;top:531px">[虚拟] <b>全球新能源充電卡</b></div>
<div class="a td" style="left:881px;top:531px;width:90px;letter-spacing:0">新能源充電卡</div>
<div class="a td pr" style="left:1061px;top:531px;width:60px">3000</div>
<div class="a td" style="left:1121px;top:531px;width:50px">999</div>
<div class="a td" style="left:1171px;top:531px;width:80px">0 / 0</div>
<svg class="a" style="left:1268.5px;top:554.6px" width="15" height="13" viewBox="0 0 15 13"><path d="M0.4 6.9 L2.3 5.2 L5.3 8.3 C7.5 5 10.5 2 14.3 0.2 L14.6 0.7 C11 3.6 8.3 7.6 6 12.4 L5 12.4 Z" fill="#52b557"/></svg>
<div class="a km" style="left:1306px;top:549px">卡密</div>
<div class="a" style="left:1349px;top:560px;width:1px;height:2px;background:#e3b0a6"></div>
<div class="a ed" style="left:1359px;top:541px">修改</div>
<div class="a de" style="left:1429px;top:541px">删除</div>
<div class="a cb" style="left:9px;top:615px"></div>
<div class="a td" style="left:31px;top:591px;width:50px">1</div>
<div class="a sort" style="top:606px;left:102px">10000</div>
<svg class="a" style="left:211px;top:601px" width="40" height="40" viewBox="0 0 40 40"><rect width="40" height="40" rx="1.8" fill="#0a9133"/><text x="2" y="10.1" font-family="Liberation Sans,sans-serif" font-size="8.6" font-weight="700" fill="#e3e230" textLength="11.9" lengthAdjust="spacingAndGlyphs">1,000</text><text x="14.8" y="9.9" font-family="Liberation Sans,sans-serif" font-size="4.2" font-weight="700" fill="#dfe033" textLength="6" lengthAdjust="spacingAndGlyphs">HKD</text><path d="M2 14.15 H26" stroke="#dde034" stroke-width="3.2" stroke-dasharray="1.9 0.5" opacity=".92"/><text x="2.2" y="31" font-family="Liberation Sans,sans-serif" font-size="10.4" font-style="italic" fill="#f4ec22" stroke="#f4ec22" stroke-width="0.35" textLength="14.8" lengthAdjust="spacingAndGlyphs">2025</text><path d="M34.7 3.2 L35.6 6.7 L38.1 6 L36.6 8.8 L37.7 13.2 L34.6 10.8 L31.8 13.7 L32.8 9.2 L31 6.6 L33.6 6.9 Z" fill="#f1e82c"/><path d="M34.4 7.2 L35.1 8.7 L34.4 10.2 L33.7 8.7 Z" fill="#0a9133"/><ellipse cx="32.4" cy="34.3" rx="6.4" ry="4" fill="#cfeeda"/><ellipse cx="32.6" cy="34" rx="3.8" ry="2.1" fill="#86d6a6"/><path d="M20.8 26 Q20.8 23 23 22.4 L24.6 20.3 L30.8 18.9 L36 20 L37 24.6 L34.5 26 L28.4 30.8 L23.5 30.4 Q20.8 29.5 20.8 26 Z" fill="#eef9f1"/><path d="M24.9 20.6 L30.6 19.3 L31 22.6 L26.6 23.6 Z" fill="#1c5632"/><ellipse cx="27.5" cy="28.6" rx="1.1" ry="2.3" fill="#123f25"/><ellipse cx="35.6" cy="24" rx="0.8" ry="2" fill="#123f25"/><path d="M22.6 26.6 L24.8 26.2" stroke="#2c6a45" stroke-width="0.8"/><rect x="30.7" y="14.9" width="3.9" height="18.4" rx="1.8" fill="#63cf95" opacity=".92"/><rect x="31.5" y="16" width="1.4" height="14" rx="0.7" fill="#baf0d2"/></svg>
<div class="a nm" style="left:287px;top:591px">[虚拟] <b>全球新能源充電卡</b></div>
<div class="a td" style="left:881px;top:591px;width:90px;letter-spacing:0">新能源充電卡</div>
<div class="a td pr" style="left:1061px;top:591px;width:60px">1000</div>
<div class="a td" style="left:1121px;top:591px;width:50px">965</div>
<div class="a td" style="left:1171px;top:591px;width:80px">34 / 0</div>
<svg class="a" style="left:1268.5px;top:614.6px" width="15" height="13" viewBox="0 0 15 13"><path d="M0.4 6.9 L2.3 5.2 L5.3 8.3 C7.5 5 10.5 2 14.3 0.2 L14.6 0.7 C11 3.6 8.3 7.6 6 12.4 L5 12.4 Z" fill="#52b557"/></svg>
<div class="a km" style="left:1306px;top:609px">卡密</div>
<div class="a" style="left:1349px;top:620px;width:1px;height:2px;background:#e3b0a6"></div>
<div class="a ed" style="left:1359px;top:601px">修改</div>
<div class="a de" style="left:1429px;top:601px">删除</div>
</div>
<div class="a" style="left:267px;top:828px;width:1472px;height:15px;background:#fafafa"></div>
<div class="a" style="left:285px;top:831px;width:1311px;height:9px;border-radius:5px;background:#8c8c8c"></div>
<svg class="a" style="left:271px;top:830px" width="7" height="11" viewBox="0 0 7 11"><path d="M0.8 5.5 L6 0.6 L6 10.4 Z" fill="#8a8a8a"/></svg>
<svg class="a" style="left:1727px;top:830px" width="7" height="11" viewBox="0 0 7 11"><path d="M6.2 5.5 L1 0.6 L1 10.4 Z" fill="#8a8a8a"/></svg>
<div class="a card" style="left:267px;top:855px;width:1472px;height:80px;background:#fafafa"></div>
<div class="a cb" style="left:287px;top:877px"></div>
<div class="a bb" style="left:309px;width:94px">批量删除</div>
<div class="a bb" style="left:411px;width:94px">更新排序</div>
<div class="a bb" style="left:514px;width:94px">批量上架</div>
<div class="a bb" style="left:616px;width:94px">批量下架</div>
<div class="a bb" style="left:719px;width:94px">批量推荐</div>
<div class="a bb" style="left:821px;width:94px">取消推荐</div>
<div class="a bb" style="left:924px;width:122px">批量转移商品</div>
<svg class="a" style="left:0;top:0;pointer-events:none" width="1754" height="926" viewBox="0 0 1754 926">
<circle cx="877.55" cy="463.25" r="139.8" fill="none" stroke="#ff0000" stroke-width="5"/>
<text x="774.1 769.4 773.3 785.3 804.6 829.6 858.4 888.6 918.0 944.3 965.2 979.3 985.5" y="494.6 464.7 434.7 406.8 383.5 366.4 356.9 355.7 363.0 378.2 400.0 426.8 456.5" rotate="-102.5 -86.4 -70.3 -54.2 -38.1 -22.0 -5.9 10.3 26.4 42.5 58.6 74.7 90.8" font-family="Liberation Mono,monospace" font-size="27.5" fill="#ff0000" stroke="#ff0000" stroke-width="0.75" stroke-linejoin="round">www.515ym.com</text>
<text x="814.0 827.5 841.7 856.8 869.4 888.2 901.6 915.8 928.1" y="577.3 583.9 588.8 592.1 593.6 593.3 591.6 588.1 583.7" rotate="27.4 20.8 14.2 7.6 1.0 -5.5 -12.1 -18.7 -25.3" font-family="Liberation Sans,sans-serif" font-style="italic" font-size="14" fill="#ff0000">515ym.com</text>
<text x="803.3" y="476.7" font-family="Liberation Sans,sans-serif" font-size="38.5" letter-spacing="0.6" fill="#ff0000">515<tspan x="873.6" y="476.6" font-family="Noto Serif CJK SC,serif" font-weight="600" font-size="35.5" letter-spacing="2.8">源码</tspan></text>
<text transform="translate(802.2 543.6) scale(1 1.03)" x="0" y="0" font-family="Liberation Mono,monospace" font-size="29" letter-spacing="-0.55" fill="#ff0000" stroke="#ff0000" stroke-width="1.0" stroke-linejoin="round">515ym.com</text>
</svg>
</body>
</html>
